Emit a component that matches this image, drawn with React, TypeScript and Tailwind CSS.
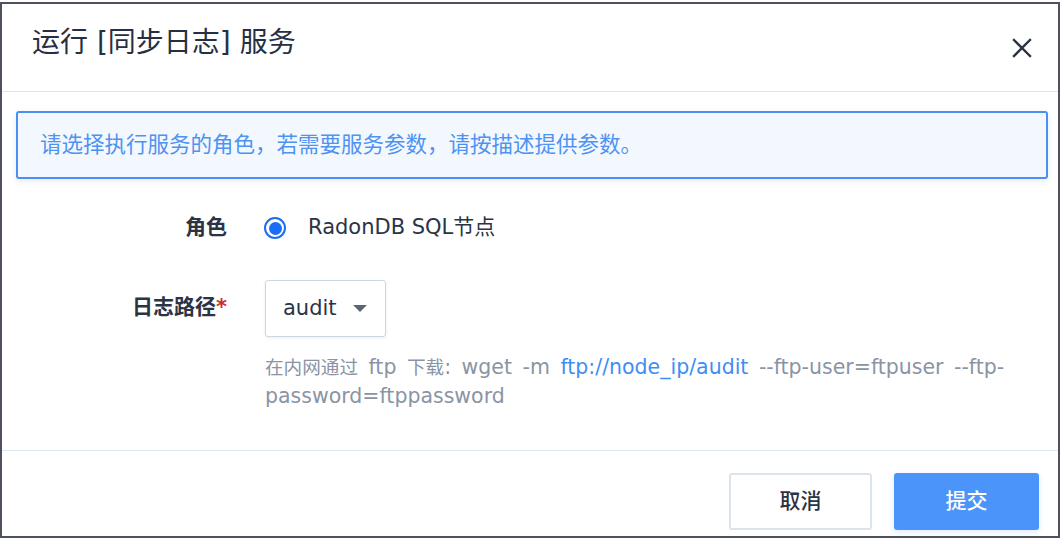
import React from "react";

const font = {
  fontFamily: '"DejaVu Sans", "Noto Sans CJK SC", sans-serif',
};

function CloseIcon() {
  return (
    <svg width="20" height="20" viewBox="0 0 20 20" fill="none">
      <path d="M2 2L18 18M18 2L2 18" stroke="#2a3343" strokeWidth="2.4" strokeLinecap="square" />
    </svg>
  );
}

function Radio() {
  return (
    <div className="w-[22px] h-[22px] rounded-full border-2 border-[#1c6df6] flex items-center justify-center">
      <div className="w-[13px] h-[13px] rounded-full bg-[#1c6df6]" />
    </div>
  );
}

function App() {
  return (
    <div className="w-[1064px] h-[544px] bg-white pt-[2px]" style={font}>
      <div className="w-[1060px] h-[536px] border-2 border-[#4d525c] bg-white flex flex-col">
        {/* header */}
        <div className="h-[87px] flex items-center justify-between pl-[30px] pr-[26px] shrink-0">
          <h2 className="text-[28px] font-normal text-[#263042] -mt-[10px]">运行 [同步日志] 服务</h2>
          <CloseIcon />
        </div>
        <div className="h-px bg-[#dde5ee] shrink-0" />

        {/* body */}
        <div className="flex-1 pt-[19px]">
          <div className="ml-[14px] mr-[10px] h-[68px] rounded-[3px] border-2 border-[#4a90f2] bg-[#f3f8fe] flex items-center pl-[22px] shadow-[0_2px_6px_rgba(60,80,120,0.12)]">
            <p className="text-[21.5px] text-[#4f93f2]">请选择执行服务的角色，若需要服务参数，请按描述提供参数。</p>
          </div>

          <div className="flex items-center mt-[29px] h-[40px]">
            <div className="w-[225px] text-right text-[21px] font-bold text-[#2b3445]">角色</div>
            <div className="ml-[37px] flex items-center">
              <Radio />
              <span className="ml-[22px] text-[21px] text-[#2b3445]">RadonDB SQL节点</span>
            </div>
          </div>

          <div className="flex mt-[32px]">
            <div className="w-[225px] text-right text-[21px] font-bold text-[#2b3445] pt-[12px]">
              日志路径<span className="text-[#c9302c]">*</span>
            </div>
            <div className="ml-[38px]">
              <div className="w-[121px] h-[57px] rounded-[3px] border border-[#cdd6e1] shadow-[0_1px_3px_rgba(60,80,120,0.1)] flex items-center justify-between pl-[17px] pr-[18px]">
                <span className="text-[21px] text-[#2b3445]">audit</span>
                <svg width="14" height="7" viewBox="0 0 14 7">
                  <path d="M0 0H14L7 7Z" fill="#5c6573" />
                </svg>
              </div>
              <p className="mt-[16px] text-[20.5px] leading-[29px] text-[#8a94a4] [word-spacing:4px]">
                <span className="text-[18.6px]">在内网通过</span> ftp <span className="text-[18.6px]">下载</span>: wget -m{" "}
                <span className="text-[#3f8ef3]">ftp://node_ip/audit</span> --ftp-user=ftpuser --ftp-
                <br />
                password=ftppassword
              </p>
            </div>
          </div>
        </div>

        {/* footer */}
        <div className="h-px bg-[#dde5ee] shrink-0" />
        <div className="h-[85px] shrink-0 flex justify-end items-start pt-[22px] pr-[19px] gap-[22px]">
          <button className="w-[143px] h-[57px] rounded-[3px] border-2 border-[#dbe3ec] bg-white text-[21px] font-medium text-[#2b3445]">
            取消
          </button>
          <button className="w-[145px] h-[57px] rounded-[3px] bg-[#4a94fa] text-[21px] font-medium text-white shadow-[0_2px_6px_rgba(74,148,250,0.2)]">
            提交
          </button>
        </div>
      </div>
    </div>
  );
}

export default App;
